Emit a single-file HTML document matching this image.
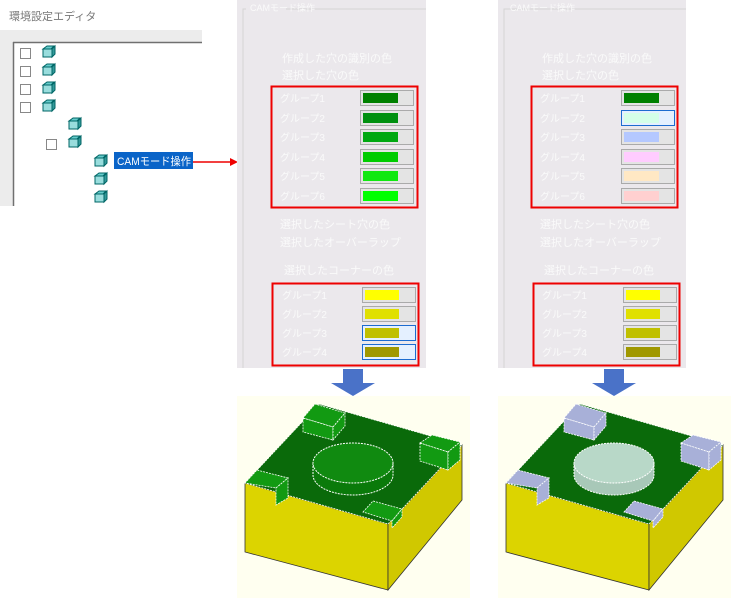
<!DOCTYPE html>
<html><head><meta charset="utf-8"><style>
html,body{margin:0;padding:0;background:#fff;width:731px;height:598px;overflow:hidden}
svg{display:block}
text{font-family:"Liberation Sans","Noto Sans CJK JP",sans-serif}
</style></head><body>
<svg width="731" height="598" viewBox="0 0 731 598" xmlns="http://www.w3.org/2000/svg">
<defs>
<g id="ic">
<polygon points="0,3 4,0 11,0 8,3" fill="#6cc" stroke="#066" stroke-width="1"/>
<rect x="0" y="3" width="9" height="8" fill="#9dd" stroke="#066" stroke-width="1"/>
<polygon points="9,3 12,0 12,8 9,11" fill="#399" stroke="#066" stroke-width="1"/>
</g>
<g id="cb"><rect x="0.5" y="0.5" width="10" height="10" fill="#fff" stroke="#888"/></g>
<g id="arrow">
<rect x="343" y="369" width="20" height="14" fill="#4a72c8"/>
<polygon points="331,383 375,383 353,396" fill="#4a72c8"/>
</g>
</defs>

<rect x="0" y="0" width="202" height="30" fill="#fff"/>
<text x="9" y="20" font-size="11" fill="#777">環境設定エディタ</text>
<rect x="0" y="30" width="202" height="176" fill="#ececec"/>
<rect x="13" y="42" width="189" height="164" fill="#fff"/>
<line x1="13.5" y1="42" x2="13.5" y2="206" stroke="#707070" stroke-width="1.5"/>
<line x1="13" y1="42.5" x2="202" y2="42.5" stroke="#707070" stroke-width="1.5"/>
<use href="#cb" x="20" y="48"/><use href="#ic" x="43" y="46"/>
<use href="#cb" x="20" y="66"/><use href="#ic" x="43" y="64"/>
<use href="#cb" x="20" y="84"/><use href="#ic" x="43" y="82"/>
<use href="#cb" x="20" y="102"/><use href="#ic" x="43" y="100"/>
<use href="#ic" x="69" y="118"/>
<use href="#cb" x="46" y="139"/><use href="#ic" x="69" y="136"/>
<use href="#ic" x="95" y="155"/>
<rect x="114" y="152" width="79" height="17" fill="#0a64c8"/>
<text x="117" y="165" font-size="11" fill="#fff" textLength="74" lengthAdjust="spacingAndGlyphs">CAMモード操作</text>
<use href="#ic" x="95" y="173"/>
<use href="#ic" x="95" y="191"/>
<line x1="193" y1="162" x2="231" y2="162" stroke="#e00" stroke-width="1.5"/>
<polygon points="230,158 238,162 230,166" fill="#e00"/>

<rect x="237" y="0" width="189" height="368" fill="#ebe8ec"/>
<polyline points="243,368 243,9 426,9" fill="none" stroke="#d4d4d4"/>
<rect x="246" y="2" width="40" height="10" fill="#ebe8ec"/>
<text x="250" y="11" font-size="9" fill="#fafafa">CAMモード操作</text>
<g font-size="11" fill="#fafafa">
<text x="282" y="62">作成した穴の識別の色</text>
<text x="282" y="79">選択した穴の色</text>
<text x="280" y="228">選択したシート穴の色</text>
<text x="280" y="246">選択したオーバーラップ</text>
<text x="284" y="274">選択したコーナーの色</text>
</g>
<rect x="271.5" y="86.5" width="146" height="121" fill="none" stroke="#e00" stroke-width="2"/>
<rect x="272.5" y="283.5" width="146" height="82" fill="none" stroke="#e00" stroke-width="2"/>
<g font-size="10" fill="#fafafa">
<text x="280" y="102">グループ1</text><text x="280" y="122">グループ2</text><text x="280" y="141">グループ3</text><text x="280" y="161">グループ4</text><text x="280" y="180">グループ5</text><text x="280" y="200">グループ6</text>
<text x="282" y="299">グループ1</text><text x="282" y="318">グループ2</text><text x="282" y="337">グループ3</text><text x="282" y="356">グループ4</text>
</g>
<g stroke="#aaa" fill="#e4e4e4">
<rect x="360.5" y="90.5" width="53" height="15"/><rect x="360.5" y="110.5" width="53" height="15"/><rect x="360.5" y="129.5" width="53" height="15"/><rect x="360.5" y="149.5" width="53" height="15"/><rect x="360.5" y="168.5" width="53" height="15"/><rect x="360.5" y="188.5" width="53" height="15"/>
<rect x="362.5" y="287.5" width="53" height="15"/><rect x="362.5" y="306.5" width="53" height="15"/>
<rect x="362.5" y="325.5" width="53" height="15" stroke="#1c6cd0" fill="#e4f0ff"/><rect x="362.5" y="344.5" width="53" height="15" stroke="#1c6cd0" fill="#e4f0ff"/>
</g>
<g>
<rect x="363" y="93" width="35" height="10" fill="#008000"/><rect x="363" y="113" width="35" height="10" fill="#009010"/><rect x="363" y="132" width="35" height="10" fill="#00a810"/><rect x="363" y="152" width="35" height="10" fill="#00cc00"/><rect x="363" y="171" width="35" height="10" fill="#10e810"/><rect x="363" y="191" width="35" height="10" fill="#00ff00"/>
<rect x="365" y="290" width="34" height="10" fill="#ffff00"/><rect x="365" y="309" width="34" height="10" fill="#e0e000"/><rect x="365" y="328" width="34" height="10" fill="#c0c000"/><rect x="365" y="347" width="34" height="10" fill="#a09800"/>
</g>

<rect x="498" y="0" width="188" height="368" fill="#ebe8ec"/>
<polyline points="504,368 504,9 686,9" fill="none" stroke="#d4d4d4"/>
<text x="510" y="11" font-size="9" fill="#fafafa">CAMモード操作</text>
<g font-size="11" fill="#fafafa">
<text x="542" y="62">作成した穴の識別の色</text>
<text x="542" y="79">選択した穴の色</text>
<text x="540" y="228">選択したシート穴の色</text>
<text x="540" y="246">選択したオーバーラップ</text>
<text x="544" y="274">選択したコーナーの色</text>
</g>
<rect x="531.5" y="86.5" width="146" height="121" fill="none" stroke="#e00" stroke-width="2"/>
<rect x="533.5" y="283.5" width="146" height="82" fill="none" stroke="#e00" stroke-width="2"/>
<g font-size="10" fill="#fafafa">
<text x="540" y="102">グループ1</text><text x="540" y="122">グループ2</text><text x="540" y="141">グループ3</text><text x="540" y="161">グループ4</text><text x="540" y="180">グループ5</text><text x="540" y="200">グループ6</text>
<text x="542" y="299">グループ1</text><text x="542" y="318">グループ2</text><text x="542" y="337">グループ3</text><text x="542" y="356">グループ4</text>
</g>
<g stroke="#aaa" fill="#e4e4e4">
<rect x="621.5" y="90.5" width="53" height="15"/><rect x="621.5" y="110.5" width="53" height="15" stroke="#1c6cd0" fill="#e4f0ff"/><rect x="621.5" y="129.5" width="53" height="15"/><rect x="621.5" y="149.5" width="53" height="15"/><rect x="621.5" y="168.5" width="53" height="15"/><rect x="621.5" y="188.5" width="53" height="15"/>
<rect x="623.5" y="287.5" width="53" height="15"/><rect x="623.5" y="306.5" width="53" height="15"/><rect x="623.5" y="325.5" width="53" height="15"/><rect x="623.5" y="344.5" width="53" height="15"/>
</g>
<g>
<rect x="624" y="93" width="35" height="10" fill="#008000"/><rect x="624" y="113" width="35" height="10" fill="#d4ffe8"/><rect x="624" y="132" width="35" height="10" fill="#b4c8ff"/><rect x="624" y="152" width="35" height="10" fill="#ffccff"/><rect x="624" y="171" width="35" height="10" fill="#ffe8c4"/><rect x="624" y="191" width="35" height="10" fill="#ffd0d0"/>
<rect x="626" y="290" width="34" height="10" fill="#ffff00"/><rect x="626" y="309" width="34" height="10" fill="#e0e000"/><rect x="626" y="328" width="34" height="10" fill="#c0c000"/><rect x="626" y="347" width="34" height="10" fill="#a09800"/>
</g>

<use href="#arrow"/>
<use href="#arrow" x="261"/>

<g>
<rect x="237" y="396" width="233" height="202" fill="#fffff0"/>
<polygon points="245,483 388,524 388,590 245,552" fill="#dcd400" stroke="#333" stroke-width="0.8"/>
<polygon points="388,524 462,445 462,500 388,590" fill="#d0c800" stroke="#333" stroke-width="0.8"/>
<polygon points="245,483 319,404 462,445 388,524" fill="#0a6a0a" stroke="#fff" stroke-width="0.8" stroke-dasharray="2,1"/>
<path d="M313,463 v12 a40,20 0 0 0 80,0 v-12" fill="#0a7a0a" stroke="#fff" stroke-dasharray="2,1"/>
<ellipse cx="353" cy="463" rx="40" ry="20" fill="#108a10" stroke="#fff" stroke-dasharray="2,1"/>
<g fill="#129a12" stroke="#fff" stroke-width="0.8" stroke-dasharray="2,1">
<polygon points="303,418 315,404 345,413 333,427"/><polygon points="303,418 333,427 333,440 303,432"/><polygon points="333,427 345,413 345,426 333,440"/>
<polygon points="420,443 432,435 460,442 448,452"/><polygon points="420,443 448,452 448,470 420,461"/><polygon points="448,452 460,442 460,460 448,470"/>
<polygon points="245,483 257,470 288,478 276,488"/><polygon points="276,488 288,478 288,498 276,505"/>
<polygon points="363,512 373,501 402,509 392,521"/><polygon points="392,521 402,509 402,517 392,528"/>
</g>
</g>
<g transform="translate(261,0)">
<rect x="237" y="396" width="233" height="202" fill="#fffff0"/>
<polygon points="245,483 388,524 388,590 245,552" fill="#dcd400" stroke="#333" stroke-width="0.8"/>
<polygon points="388,524 462,445 462,500 388,590" fill="#d0c800" stroke="#333" stroke-width="0.8"/>
<polygon points="245,483 319,404 462,445 388,524" fill="#0a6a0a" stroke="#fff" stroke-width="0.8" stroke-dasharray="2,1"/>
<path d="M313,463 v12 a40,20 0 0 0 80,0 v-12" fill="#a8c8b8" stroke="#fff" stroke-dasharray="2,1"/>
<ellipse cx="353" cy="463" rx="40" ry="20" fill="#b8d8c8" stroke="#fff" stroke-dasharray="2,1"/>
<g fill="#a8b0d8" stroke="#fff" stroke-width="0.8" stroke-dasharray="2,1">
<polygon points="303,418 315,404 345,413 333,427"/><polygon points="303,418 333,427 333,440 303,432"/><polygon points="333,427 345,413 345,426 333,440"/>
<polygon points="420,443 432,435 460,442 448,452"/><polygon points="420,443 448,452 448,470 420,461"/><polygon points="448,452 460,442 460,460 448,470"/>
<polygon points="245,483 257,470 288,478 276,488"/><polygon points="276,488 288,478 288,498 276,505"/>
<polygon points="363,512 373,501 402,509 392,521"/><polygon points="392,521 402,509 402,517 392,528"/>
</g>
</g>
</svg>
</body></html>
